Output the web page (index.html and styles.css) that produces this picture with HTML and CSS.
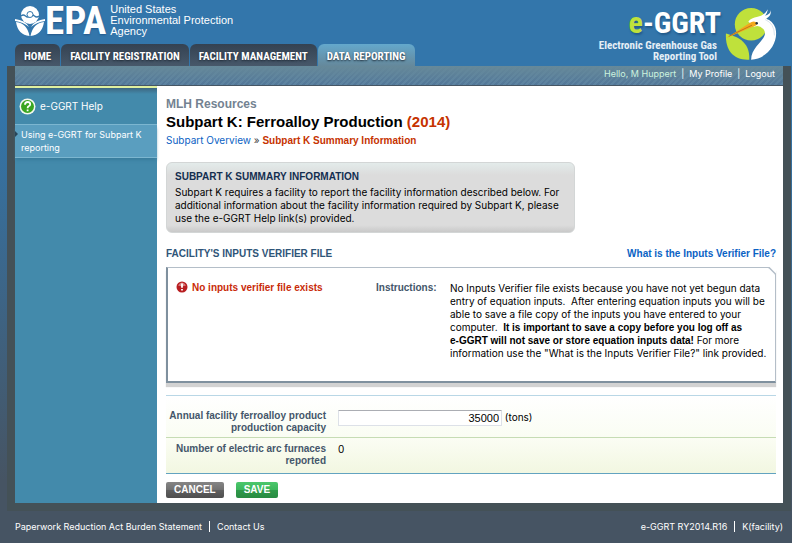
FILE: index.html
```html
<!DOCTYPE html>
<html lang="en">
<head>
<meta charset="utf-8">
<title>e-GGRT: Subpart K Summary Information</title>
<link rel="stylesheet" href="styles.css">
</head>
<body>
<header class="masthead">
  <div class="brand-side">
    <div class="epa">
      <svg class="epa-mark" viewBox="0 0 30 32" aria-hidden="true">
        <circle cx="15" cy="10" r="9" fill="#fff"/>
        <path d="M6 11q2.200-2 4.500 0t4.500 0t4.500 0t4.500 0" fill="none" stroke="#3376ab" stroke-width="1.200"/>
        <circle cx="15" cy="9.500" r="3" fill="#fff" stroke="#3376ab"/>
        <path d="M0 14Q11 15 15 24Q19 15 30 14V18Q20 19 15 31Q10 19 0 18Z" fill="#3376ab"/>
        <path d="M0 14Q10 15 14 22Q8 17 0 16ZM30 14Q20 15 16 22Q22 17 30 16Z" fill="#fff"/>
        <path d="M1 17Q12 18 14.500 31Q3 30 1 17ZM29 17Q18 18 15.500 31Q27 30 29 17Z" fill="#fff"/>
      </svg>
      <span class="epa-word">EPA</span>
      <span class="epa-name">United States<br>Environmental Protection<br>Agency</span>
    </div>
    <nav class="tabs">
      <a href="#">HOME</a>
      <a href="#">FACILITY REGISTRATION</a>
      <a href="#">FACILITY MANAGEMENT</a>
      <a href="#" class="active">DATA REPORTING</a>
    </nav>
  </div>
  <div class="ggrt">
    <div class="ggrt-text">
      <div class="ggrt-word"><span>e</span>-GGRT</div>
      <div class="ggrt-sub">Electronic Greenhouse Gas<br>Reporting Tool</div>
    </div>
    <svg class="heron" viewBox="0 0 60 58" aria-hidden="true">
      <circle cx="28" cy="18" r="17.500" fill="#bfe13b"/>
      <path d="M1 28C12 31 27 36 26 56C10 57 0 47 1 28Z" fill="#bfe13b"/>
      <path d="M25 15Q28 11 35 10Q42 9 46 2Q45 7 43 9Q49 7 49 3Q50 9 44 12Q51 14 54 22C58 37 46 55 28 56C28 40 49 33 41 23Q36 18 31 21Z" fill="#fff"/>
      <path d="M43 13Q53 17 53 30" fill="none" stroke="#d5e2ec"/>
      <path d="M1 33L26 17Q31 13 35 17Q34 20 29 21Z" fill="#f4a91d"/>
      <path d="M4 31L29 19" stroke="#a96c16" stroke-width=".8"/>
      <circle cx="34" cy="17" r="1.300" fill="#234"/>
    </svg>
  </div>
</header>
<div class="frame">
  <div class="userbar">
    <span>Hello, M Huppert</span><i>|</i><a href="#">My Profile</a><i>|</i><a href="#">Logout</a>
  </div>
  <div class="columns">
    <aside class="sidebar">
      <h2>
        <svg viewBox="0 0 17 17" aria-hidden="true">
          <circle cx="8.500" cy="8.500" r="8" fill="#f4f8ee"/>
          <circle cx="8.500" cy="8.500" r="6.500" fill="#3aa51f"/>
          <path d="M6 6.800Q6 4 8.700 4Q11.200 4 11.200 6.200Q11.200 7.600 9.600 8.300Q8.600 8.800 8.600 10.200M8.600 11.500V13.200" fill="none" stroke="#fff" stroke-width="1.800"/>
        </svg>
        e-GGRT Help
      </h2>
      <a href="#">Using e-GGRT for Subpart K reporting</a>
    </aside>
    <main class="content">
      <p class="facility">MLH Resources</p>
      <h1>Subpart K: Ferroalloy Production <span>(2014)</span></h1>
      <p class="crumbs"><a href="#">Subpart Overview</a> » <strong>Subpart K Summary Information</strong></p>
      <section class="summary">
        <h2>SUBPART K SUMMARY INFORMATION</h2>
        <p>Subpart K requires a facility to report the facility information described below. For additional information about the facility information required by Subpart K, please use the e-GGRT Help link(s) provided.</p>
      </section>
      <div class="section-head">
        <h2>FACILITY'S INPUTS VERIFIER FILE</h2>
        <a href="#">What is the Inputs Verifier File?</a>
      </div>
      <section class="verifier">
        <svg class="corner" viewBox="0 0 8 8" aria-hidden="true"><path d="M0 0H8V8Z" fill="#fff"/><path d="M0 .5H1L7.500 7V8" fill="none" stroke="#b4bec8" stroke-width="1.500"/></svg>
        <p class="status">
          <svg viewBox="0 0 12 12" aria-hidden="true"><circle cx="6" cy="6" r="5.500" fill="#b81d20"/><path d="M2 4.500Q6-1.500 10 4.500Q6 6 2 4.500Z" fill="#d98080"/><path d="M6 2.500V6.800M6 8V9.600" stroke="#fff" stroke-width="1.800"/></svg>
          No inputs verifier file exists
        </p>
        <p class="label">Instructions:</p>
        <p class="instructions">No Inputs Verifier file exists because you have not yet begun data entry of equation inputs.&nbsp; After entering equation inputs you will be able to save a file copy of the inputs you have entered to your computer.&nbsp; <strong>It is important to save a copy before you log off as <span class="app-name">e-GGRT</span> will not save or store equation inputs data!</strong> For more information use the "What is the Inputs Verifier File?" link provided.</p>
      </section>
      <form class="form">
        <div class="row">
          <label for="capacity">Annual facility ferroalloy product production capacity</label>
          <div class="value"><input id="capacity" type="text" value="35000"> (tons)</div>
        </div>
        <div class="row shaded">
          <span class="row-name">Number of electric arc furnaces reported</span>
          <div class="value">0</div>
        </div>
        <div class="actions">
          <button type="button" class="cancel">CANCEL</button>
          <button type="button" class="save">SAVE</button>
        </div>
      </form>
    </main>
  </div>
</div>
<footer class="footer">
  <div><a href="#">Paperwork Reduction Act Burden Statement</a><a href="#">Contact Us</a></div>
  <div><span>e-GGRT RY2014.R16</span><span>K(facility)</span></div>
</footer>
</body>
</html>
```
FILE: styles.css
```css
* { box-sizing: border-box; }
html { background: #465463; }
body {
  margin: 0;
  min-height: 100vh;
  background: linear-gradient(#3376ab 0, #3376ab 100px, #465463 480px);
  font: 10px/13px Inter, Arial, sans-serif;
  color: #000;
}
h1, h2, p { margin: 0; font-size: inherit; }
h1, h2, strong, .facility, .section-head a, .status, .label, .row label, .row-name { font-family: "Liberation Sans", Arial, sans-serif; }
a { color: inherit; text-decoration: none; }

.masthead { display: flex; justify-content: space-between; height: 66px; padding: 0 11px 0 15px; }
.brand-side { display: flex; flex-direction: column; justify-content: space-between; }
.epa { display: flex; align-items: center; padding-top: 4px; color: #fff; }
.epa-mark { width: 30px; height: 32px; }
.epa-word { font: bold 39px/32px "Roboto Condensed", Roboto, sans-serif; text-shadow: 0 1px 2px #25588a; }
.epa-name { margin-left: 4px; font: 11px/11px "Liberation Sans", Arial, sans-serif; }
.tabs { display: flex; gap: 1px; }
.tabs a {
  height: 22px;
  padding: 0 9px;
  border-radius: 6px 6px 0 0;
  background: linear-gradient(#344252, #47586a);
  font: bold 11px/25px "Roboto Condensed", Roboto, sans-serif;
  color: #fff;
  text-shadow: 0 1px 2px #1c2834;
}
.tabs .active { background: linear-gradient(#64a8cc, #65889b); }
.ggrt { display: flex; gap: 4px; padding-top: 6px; color: #fff; text-align: right; }
.ggrt-word { font: bold 30px/34px "Roboto Condensed", Roboto, sans-serif; text-shadow: 1px 2px 2px #235b8b; }
.ggrt-word span { color: #bfe13b; }
.ggrt-sub { padding-right: 4px; font: bold 11px/11px "Roboto Condensed", Roboto, sans-serif; color: #e6eff6; }
.heron { width: 56px; height: 57px; }

.frame { margin: 0 1px 0 7px; border: solid #445157; border-width: 0 8px 8px; }
.userbar {
  display: flex;
  justify-content: flex-end;
  height: 20px;
  padding-right: 8px;
  border-bottom: 1px solid #465664;
  background: linear-gradient(#668999, transparent), repeating-linear-gradient(135deg, #527799 0, #527799 2px, #5c83a2 2px, #5c83a2 4px);
  color: #fff;
  font-size: 9px;
  line-height: 16px;
}
.userbar span { color: #ccf3df; }
.userbar i { margin: 0 5px; font-style: normal; }
.columns { display: flex; background: #fff; }
.sidebar { width: 142px; flex: none; border-top: 2px solid #dff0a0; background: #438aab; color: #fff; }
.sidebar h2 { display: flex; align-items: center; gap: 4px; height: 36px; padding-left: 4px; background: linear-gradient(#3d6680, #438aab 6px); font: 10px/13px Inter, Arial, sans-serif; }
.sidebar svg { width: 17px; height: 17px; }
.sidebar a { position: relative; display: block; padding: 3px 6px; border: solid #7cb6d0; border-width: 1px 0; background: #5a9ebf; box-shadow: 0 3px 3px -1px #397c9c; font-size: 9px; }
.sidebar a::before { content: ""; position: absolute; left: 0; top: 6px; border: solid transparent; border-width: 3px 0 3px 3px; border-left-color: #28465a; }

.content { flex: 1; min-width: 0; padding: 11px 7px 5px 9px; }
.facility { font-size: 12px; line-height: 14px; font-weight: bold; color: #738291; }
h1 { font-size: 15px; line-height: 21px; }
h1 span, .crumbs strong { color: #c63300; }
.crumbs { line-height: 16px; color: #444; }
.crumbs a, .section-head a { color: #0a62c4; }
.summary { width: 67%; margin-top: 13px; padding: 7px 8px; border: 1px solid #d3d6d6; border-radius: 6px; background: linear-gradient(#e3ebea, #dcdcdc 12px, #dcdcdc 90%, #c9c9c9); }
.summary h2 { margin-bottom: 3px; color: #132e50; }
.section-head { display: flex; justify-content: space-between; margin-top: 14px; font-weight: bold; }
.section-head h2 { color: #2f5578; }
.verifier {
  position: relative;
  display: flex;
  min-height: 116px;
  margin-top: 7px;
  padding: 13px 8px;
  border: 1px solid #b4bec8;
  border-left: 2px solid #7f909e;
  border-bottom: 2px solid #7f909e;
  box-shadow: 0 4px 1px #d2d2d2;
}
.corner { position: absolute; top: -1px; right: -1px; width: 8px; height: 8px; }
.status { display: flex; gap: 4px; width: 200px; font-weight: bold; color: #c92b09; }
.status svg { width: 12px; height: 12px; }
.label { width: 74px; font-weight: bold; color: #44566a; }
.instructions { flex: 1; padding-top: 1px; }
.app-name { white-space: nowrap; }
.form { margin-top: 12px; }
.row { display: flex; gap: 12px; min-height: 42px; padding-top: 14px; border-top: 1px solid #b9d7e6; background: linear-gradient(#fff, #fafdf3); }
.row label, .row-name { width: 160px; line-height: 12px; font-weight: bold; text-align: right; color: #44566a; }
.row.shaded { min-height: 37px; padding-top: 5px; border-top-color: #c6dcb4; border-bottom: 1px solid #62a3c0; background: linear-gradient(#fbfdf4, #f2f7e1); }
.value input { width: 164px; height: 16px; padding: 0 2px; border: 1px solid #dde1e8; border-top-color: #abadb3; border-radius: 1px; font: 11px "Liberation Sans", Arial, sans-serif; text-align: right; vertical-align: middle; }
.actions { display: flex; gap: 12px; margin-top: 8px; }
.actions button { height: 16px; padding: 0 8px; border: 0; border-radius: 2px; font: bold 10px/16px "Liberation Sans", Arial, sans-serif; color: #fff; }
.cancel { background: linear-gradient(#858585, #707070 50%, #606060 50%, #4e4e4e); }
.save { background: linear-gradient(#4cc76c, #3bb65b 50%, #2f9a4a 50%, #298b42); }

.footer { display: flex; justify-content: space-between; padding: 9px 9px 9px 15px; color: #fff; font-size: 9px; }
.footer a + a, .footer span + span { margin-left: 7px; padding-left: 7px; border-left: 1px solid #fff; }
```
